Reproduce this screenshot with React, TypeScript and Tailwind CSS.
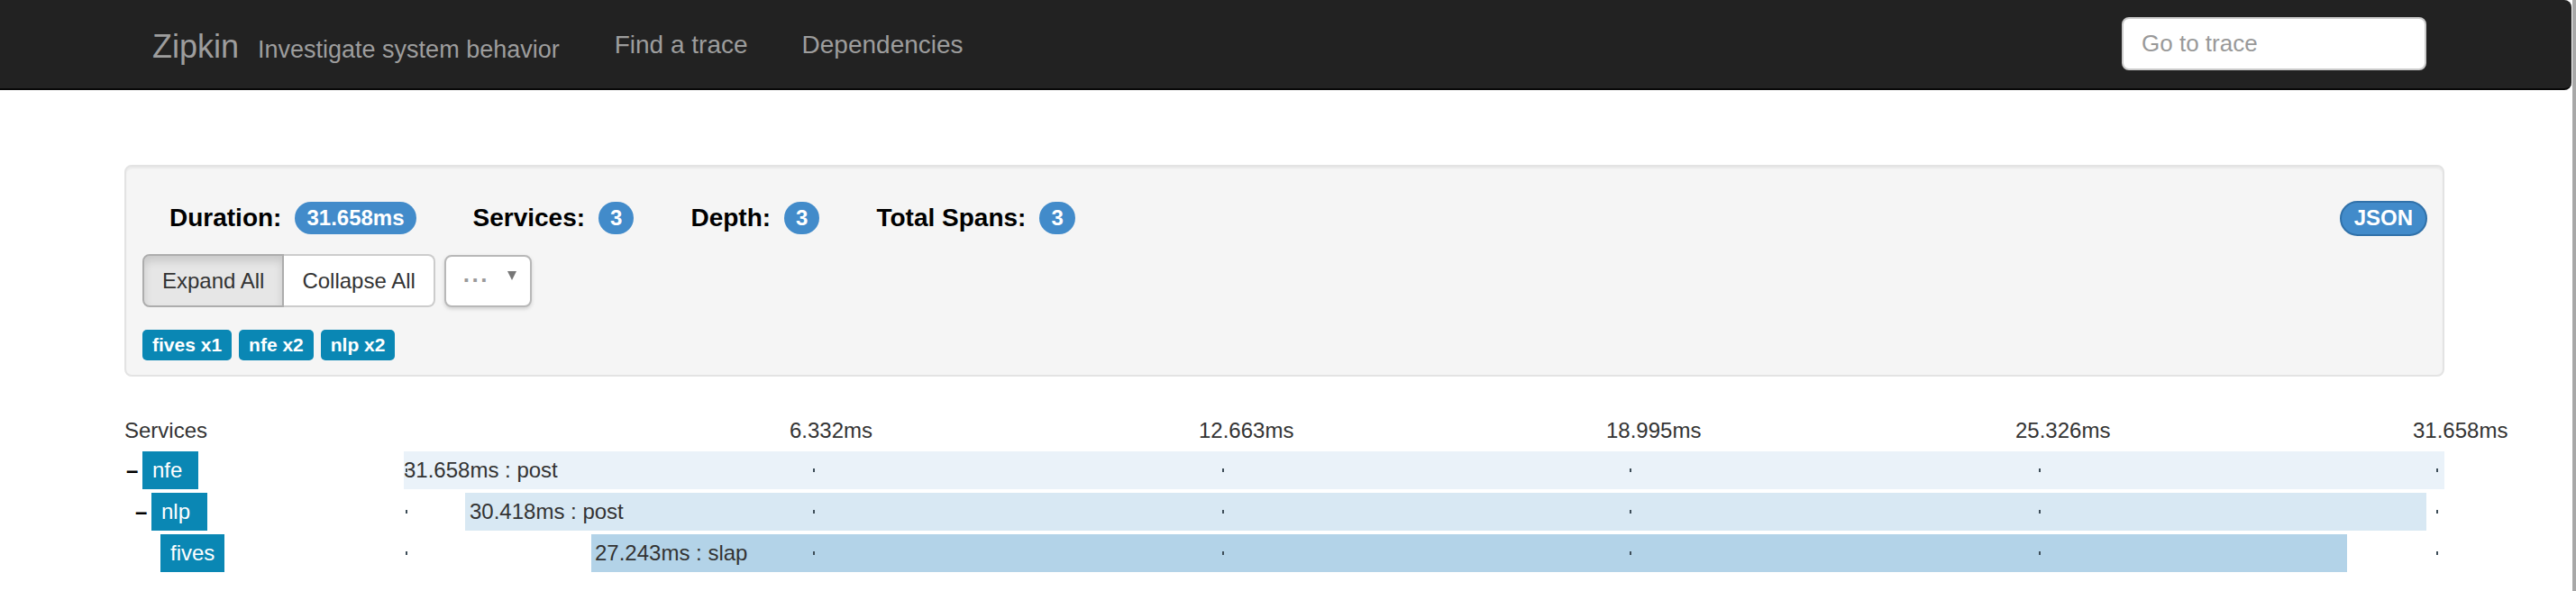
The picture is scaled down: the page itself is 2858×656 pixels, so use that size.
import React from 'react';

const stats = [
  { label: 'Duration:', value: '31.658ms' },
  { label: 'Services:', value: '3' },
  { label: 'Depth:', value: '3' },
  { label: 'Total Spans:', value: '3' },
];

const tags = ['fives x1', 'nfe x2', 'nlp x2'];

// positions in px inside the 2264px timeline lane
const ticks = [2, 454, 908, 1360, 1814, 2255];
const tickLabels = ['6.332ms', '12.663ms', '18.995ms', '25.326ms', '31.658ms'];

const spans = [
  { service: 'nfe', depth: 0, expander: true, left: 0, width: 2264, text: '31.658ms : post', textOffset: 0, color: 'bg-[#eaf2f9]' },
  { service: 'nlp', depth: 1, expander: true, left: 68, width: 2176, text: '30.418ms : post', textOffset: 5, color: 'bg-[#d8e8f3]' },
  { service: 'fives', depth: 2, expander: false, left: 208, width: 1948, text: '27.243ms : slap', textOffset: 4, color: 'bg-[#b3d3e8]' },
];

const App: React.FC = () => {
  return (
    <div className="flex w-full min-h-[656px] bg-white font-['Liberation_Sans',Arial,sans-serif] text-[#333]">
      <div className="flex-1">
        {/* navbar */}
        <div className="h-[100px] bg-[#222] border-b-2 border-[#080808] rounded-r-[8px]">
          <div className="ml-[138px] w-[2574px] h-full flex items-center">
            <div className="flex items-baseline pl-[31px] pt-[6px]">
              <span className="text-[36px] text-[#9d9d9d]">Zipkin</span>
              <span className="ml-[21px] text-[27px] text-[#9d9d9d]">Investigate system behavior</span>
            </div>
            <div className="flex ml-[31px] pt-[2px]">
              <span className="px-[30px] text-[28px] text-[#9d9d9d]">Find a trace</span>
              <span className="px-[30px] text-[28px] text-[#9d9d9d]">Dependencies</span>
            </div>
            <div className="ml-auto mr-[20px] w-[338px] h-[59px] bg-white border-2 border-[#ccc] rounded-[8px] flex items-center pl-[20px] -mt-[2px]">
              <span className="text-[26px] text-[#999]">Go to trace</span>
            </div>
          </div>
        </div>

        <div className="ml-[138px] w-[2574px]">
          {/* summary panel */}
          <div className="mt-[83px] bg-[#f5f5f5] border-2 border-[#e3e3e3] rounded-[8px] shadow-[inset_0_2px_2px_rgba(0,0,0,0.05)] pt-[37px] pb-[16px] pl-[18px] pr-[17px]">
            <div className="flex items-center justify-between h-[40px]">
              <div className="flex items-center gap-x-[63px] ml-[30px]">
                {stats.map((s) => (
                  <div key={s.label} className="flex items-center gap-[15px]">
                    <span className="text-[28px] font-bold text-black">{s.label}</span>
                    <span className="h-[36px] px-[13px] rounded-full bg-[#428bca] text-white text-[24px] font-bold flex items-center">
                      {s.value}
                    </span>
                  </div>
                ))}
              </div>
              <span className="h-[39px] px-[14px] rounded-full bg-[#428bca] border-2 border-[#3071a9] text-white text-[24px] font-bold flex items-center">
                JSON
              </span>
            </div>

            <div className="flex items-center mt-[20px]">
              <div className="flex">
                <span className="h-[59px] px-[20px] flex items-center text-[24px] bg-[#e6e6e6] border-2 border-[#adadad] rounded-l-[8px] shadow-[inset_0_6px_10px_rgba(0,0,0,0.125)]">
                  Expand All
                </span>
                <span className="h-[59px] px-[20px] flex items-center text-[24px] bg-white border-2 border-l-0 border-[#ccc] rounded-r-[8px]">
                  Collapse All
                </span>
              </div>
              <span className="ml-[10px] h-[58px] w-[97px] pl-[19px] flex items-center bg-white border-2 border-[#b8b8b8] rounded-[8px] shadow-[0_2px_4px_rgba(0,0,0,0.15)]">
                <span className="text-[26px] font-bold text-[#999] tracking-[1px]">···</span>
                <svg className="ml-[20px] mb-[12px]" width="10" height="10" viewBox="0 0 10 10">
                  <polygon points="0,0 10,0 5,10" fill="#777" />
                </svg>
              </span>
            </div>

            <div className="flex gap-[8px] mt-[25px]">
              {tags.map((t) => (
                <span key={t} className="h-[34px] px-[11px] flex items-center rounded-[5px] bg-[#0a87b4] text-white text-[21px] font-bold">
                  {t}
                </span>
              ))}
            </div>
          </div>

          {/* timeline header */}
          <div className="flex mt-[45px] h-[38px]">
            <div className="w-[310px] text-[24px] leading-[28px] pt-[1px]">Services</div>
            <div className="relative w-[2264px]">
              {tickLabels.map((l, i) => (
                <span
                  key={l}
                  className="absolute top-[1px] text-[24px] leading-[28px]"
                  style={{ left: ticks[i + 1] - 26 }}
                >
                  {l}
                </span>
              ))}
            </div>
          </div>

          {/* span rows */}
          {spans.map((s) => (
            <div key={s.service} className="flex h-[42px] mb-[4px]">
              <div className="w-[310px] flex items-center" style={{ paddingLeft: 2 + s.depth * 10 }}>
                <span className="w-[18px] text-[24px] font-bold text-black leading-none">{s.expander ? '–' : ''}</span>
                <span className="h-[42px] min-w-[62px] px-[11px] flex items-center bg-[#0a87b4] text-white text-[24px]">
                  {s.service}
                </span>
              </div>
              <div className="relative w-[2264px] h-[42px]">
                <div className={`absolute top-0 h-[42px] ${s.color}`} style={{ left: s.left, width: s.width }} />
                {ticks.map((t) => (
                  <span key={t} className="absolute top-[19px] w-[2px] h-[4px] bg-[#3d4d58]" style={{ left: t }} />
                ))}
                <span
                  className="absolute top-0 h-[42px] flex items-center text-[24px] whitespace-nowrap"
                  style={{ left: s.left + s.textOffset }}
                >
                  {s.text}
                </span>
              </div>
            </div>
          ))}
        </div>
      </div>
      <div className="w-[5px] flex">
        <div className="w-[1px] bg-white" />
        <div className="w-[4px] bg-[#a8a8a8]" />
      </div>
    </div>
  );
};

export default App;
